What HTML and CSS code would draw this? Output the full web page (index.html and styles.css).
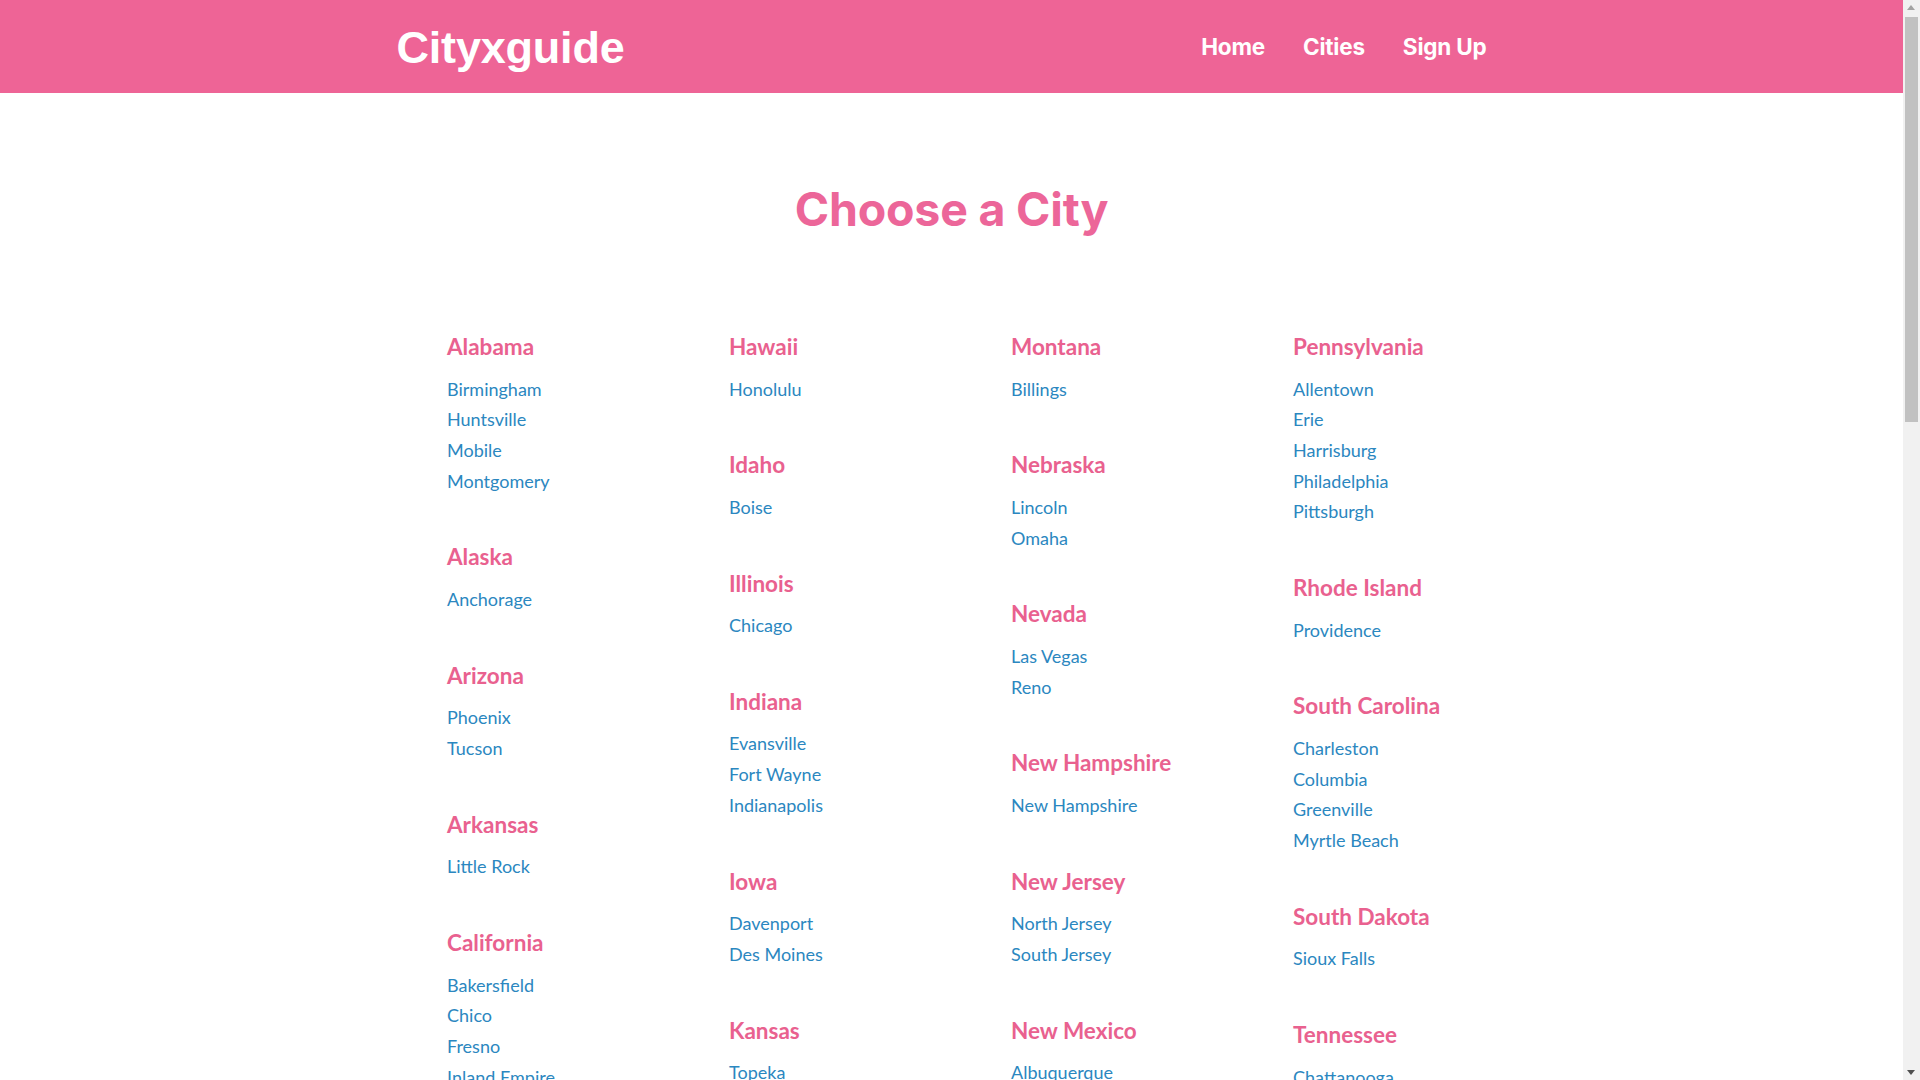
FILE: index.html
```html
<!DOCTYPE html>
<html lang="en">
<head>
<meta charset="utf-8">
<title>Cityxguide - Choose a City</title>
<link rel="stylesheet" href="styles.css">
</head>
<body>
<header class="site-header">
  <div class="header-inner">
    <a class="logo" href="#">Cityxguide</a>
    <nav class="main-nav">
      <a href="#">Home</a>
      <a href="#">Cities</a>
      <a href="#">Sign Up</a>
    </nav>
  </div>
</header>

<main class="page">
  <h1 class="page-title">Choose a City</h1>

  <div class="state-grid">
    <div class="state-col">
      <section class="state"><h3>Alabama</h3><ul><li><a href="#">Birmingham</a></li><li><a href="#">Huntsville</a></li><li><a href="#">Mobile</a></li><li><a href="#">Montgomery</a></li></ul></section>
      <section class="state"><h3>Alaska</h3><ul><li><a href="#">Anchorage</a></li></ul></section>
      <section class="state"><h3>Arizona</h3><ul><li><a href="#">Phoenix</a></li><li><a href="#">Tucson</a></li></ul></section>
      <section class="state"><h3>Arkansas</h3><ul><li><a href="#">Little Rock</a></li></ul></section>
      <section class="state"><h3>California</h3><ul><li><a href="#">Bakersfield</a></li><li><a href="#">Chico</a></li><li><a href="#">Fresno</a></li><li><a href="#">Inland Empire</a></li><li><a href="#">Los Angeles</a></li><li><a href="#">Sacramento</a></li><li><a href="#">San Diego</a></li><li><a href="#">San Francisco</a></li></ul></section>
      <section class="state"><h3>Colorado</h3><ul><li><a href="#">Colorado Springs</a></li><li><a href="#">Denver</a></li></ul></section>
      <section class="state"><h3>Connecticut</h3><ul><li><a href="#">Hartford</a></li><li><a href="#">New Haven</a></li></ul></section>
      <section class="state"><h3>Florida</h3><ul><li><a href="#">Jacksonville</a></li><li><a href="#">Miami</a></li><li><a href="#">Orlando</a></li><li><a href="#">Tampa</a></li></ul></section>
      <section class="state"><h3>Georgia</h3><ul><li><a href="#">Atlanta</a></li><li><a href="#">Savannah</a></li></ul></section>
    </div>

    <div class="state-col">
      <section class="state"><h3>Hawaii</h3><ul><li><a href="#">Honolulu</a></li></ul></section>
      <section class="state"><h3>Idaho</h3><ul><li><a href="#">Boise</a></li></ul></section>
      <section class="state"><h3>Illinois</h3><ul><li><a href="#">Chicago</a></li></ul></section>
      <section class="state"><h3>Indiana</h3><ul><li><a href="#">Evansville</a></li><li><a href="#">Fort Wayne</a></li><li><a href="#">Indianapolis</a></li></ul></section>
      <section class="state"><h3>Iowa</h3><ul><li><a href="#">Davenport</a></li><li><a href="#">Des Moines</a></li></ul></section>
      <section class="state"><h3>Kansas</h3><ul><li><a href="#">Topeka</a></li><li><a href="#">Wichita</a></li></ul></section>
      <section class="state"><h3>Kentucky</h3><ul><li><a href="#">Lexington</a></li><li><a href="#">Louisville</a></li></ul></section>
      <section class="state"><h3>Louisiana</h3><ul><li><a href="#">Baton Rouge</a></li><li><a href="#">New Orleans</a></li></ul></section>
      <section class="state"><h3>Maryland</h3><ul><li><a href="#">Baltimore</a></li></ul></section>
      <section class="state"><h3>Massachusetts</h3><ul><li><a href="#">Boston</a></li></ul></section>
      <section class="state"><h3>Michigan</h3><ul><li><a href="#">Detroit</a></li><li><a href="#">Grand Rapids</a></li></ul></section>
    </div>

    <div class="state-col">
      <section class="state"><h3>Montana</h3><ul><li><a href="#">Billings</a></li></ul></section>
      <section class="state"><h3>Nebraska</h3><ul><li><a href="#">Lincoln</a></li><li><a href="#">Omaha</a></li></ul></section>
      <section class="state"><h3>Nevada</h3><ul><li><a href="#">Las Vegas</a></li><li><a href="#">Reno</a></li></ul></section>
      <section class="state"><h3>New Hampshire</h3><ul><li><a href="#">New Hampshire</a></li></ul></section>
      <section class="state"><h3>New Jersey</h3><ul><li><a href="#">North Jersey</a></li><li><a href="#">South Jersey</a></li></ul></section>
      <section class="state"><h3>New Mexico</h3><ul><li><a href="#">Albuquerque</a></li><li><a href="#">Santa Fe</a></li></ul></section>
      <section class="state"><h3>New York</h3><ul><li><a href="#">Albany</a></li><li><a href="#">Buffalo</a></li><li><a href="#">New York City</a></li></ul></section>
      <section class="state"><h3>North Carolina</h3><ul><li><a href="#">Charlotte</a></li><li><a href="#">Raleigh</a></li></ul></section>
      <section class="state"><h3>Ohio</h3><ul><li><a href="#">Cincinnati</a></li><li><a href="#">Cleveland</a></li><li><a href="#">Columbus</a></li></ul></section>
      <section class="state"><h3>Oregon</h3><ul><li><a href="#">Portland</a></li></ul></section>
    </div>

    <div class="state-col">
      <section class="state"><h3>Pennsylvania</h3><ul><li><a href="#">Allentown</a></li><li><a href="#">Erie</a></li><li><a href="#">Harrisburg</a></li><li><a href="#">Philadelphia</a></li><li><a href="#">Pittsburgh</a></li></ul></section>
      <section class="state"><h3>Rhode Island</h3><ul><li><a href="#">Providence</a></li></ul></section>
      <section class="state"><h3>South Carolina</h3><ul><li><a href="#">Charleston</a></li><li><a href="#">Columbia</a></li><li><a href="#">Greenville</a></li><li><a href="#">Myrtle Beach</a></li></ul></section>
      <section class="state"><h3>South Dakota</h3><ul><li><a href="#">Sioux Falls</a></li></ul></section>
      <section class="state"><h3>Tennessee</h3><ul><li><a href="#">Chattanooga</a></li><li><a href="#">Knoxville</a></li><li><a href="#">Memphis</a></li><li><a href="#">Nashville</a></li></ul></section>
      <section class="state"><h3>Texas</h3><ul><li><a href="#">Austin</a></li><li><a href="#">Dallas</a></li><li><a href="#">Houston</a></li><li><a href="#">San Antonio</a></li></ul></section>
      <section class="state"><h3>Utah</h3><ul><li><a href="#">Salt Lake City</a></li></ul></section>
      <section class="state"><h3>Virginia</h3><ul><li><a href="#">Richmond</a></li><li><a href="#">Virginia Beach</a></li></ul></section>
      <section class="state"><h3>Washington</h3><ul><li><a href="#">Seattle</a></li><li><a href="#">Spokane</a></li></ul></section>
    </div>
  </div>
</main>

<div class="fake-scrollbar" aria-hidden="true">
  <span class="sb-arrow sb-up"></span>
  <span class="sb-thumb"></span>
  <span class="sb-arrow sb-down"></span>
</div>
</body>
</html>
```

FILE: styles.css
```css
html, body {
  margin: 0;
  padding: 0;
}

html {
  overflow: hidden;
}

body {
  background: #ffffff;
  font-family: Lato, "Open Sans", sans-serif;
  margin-right: 17px;
}

a {
  text-decoration: none;
}

.site-header {
  background: #ee6496;
  height: 93px;
}

.header-inner {
  box-sizing: border-box;
  width: 1140px;
  height: 93px;
  margin: 0 auto;
  padding: 0 15px;
  display: flex;
  align-items: center;
  justify-content: space-between;
}

.logo {
  color: #ffffff;
  font-family: "Liberation Sans", Arial, sans-serif;
  font-weight: 700;
  font-size: 45px;
  letter-spacing: -0.2px;
  line-height: 1;
  margin-top: 2px;
}

.main-nav {
  display: flex;
  align-items: center;
  margin-top: 2px;
}

.main-nav a {
  color: #ffffff;
  font-family: Inter, "Liberation Sans", sans-serif;
  font-weight: 700;
  font-size: 22.5px;
  letter-spacing: -0.2px;
  padding: 0 19px;
  line-height: 1;
}

.main-nav a:last-child {
  padding-right: 20px;
}

.page {
  padding-bottom: 80px;
}

.page-title {
  margin: 89px 0 0;
  text-align: center;
  color: #ec6699;
  font-family: Inter, "Liberation Sans", sans-serif;
  font-weight: 700;
  font-size: 46.5px;
  line-height: 54px;
  letter-spacing: -0.2px;
}

.state-grid {
  width: 1128px;
  margin: 98px auto 0;
  display: grid;
  grid-template-columns: repeat(4, 1fr);
}

.state-col {
  padding-left: 59.5px;
}

.state h3 {
  margin: 0 0 13.2px;
  color: #e9618f;
  font-family: Lato, sans-serif;
  font-weight: 700;
  font-size: 22.5px;
  line-height: 26.4px;
}

.state ul {
  list-style: none;
  margin: 0 0 48px;
  padding: 0;
}

.state li {
  font-size: 18px;
  line-height: 30.7px;
}

.state li a {
  color: #2b87c0;
}

/* static rendering of the browser scrollbar seen in the screenshot */
.fake-scrollbar {
  position: fixed;
  top: 0;
  right: 0;
  width: 17px;
  height: 100vh;
  background: #f1f1f1;
}

.sb-thumb {
  position: absolute;
  top: 17px;
  left: 2px;
  width: 13px;
  height: 405px;
  background: #c1c1c1;
}

.sb-arrow {
  position: absolute;
  left: 4px;
  width: 0;
  height: 0;
  border-left: 4.5px solid transparent;
  border-right: 4.5px solid transparent;
}

.sb-up {
  top: 5px;
  border-bottom: 5px solid #a3a3a3;
}

.sb-down {
  bottom: 5px;
  border-top: 5px solid #505050;
}
```
